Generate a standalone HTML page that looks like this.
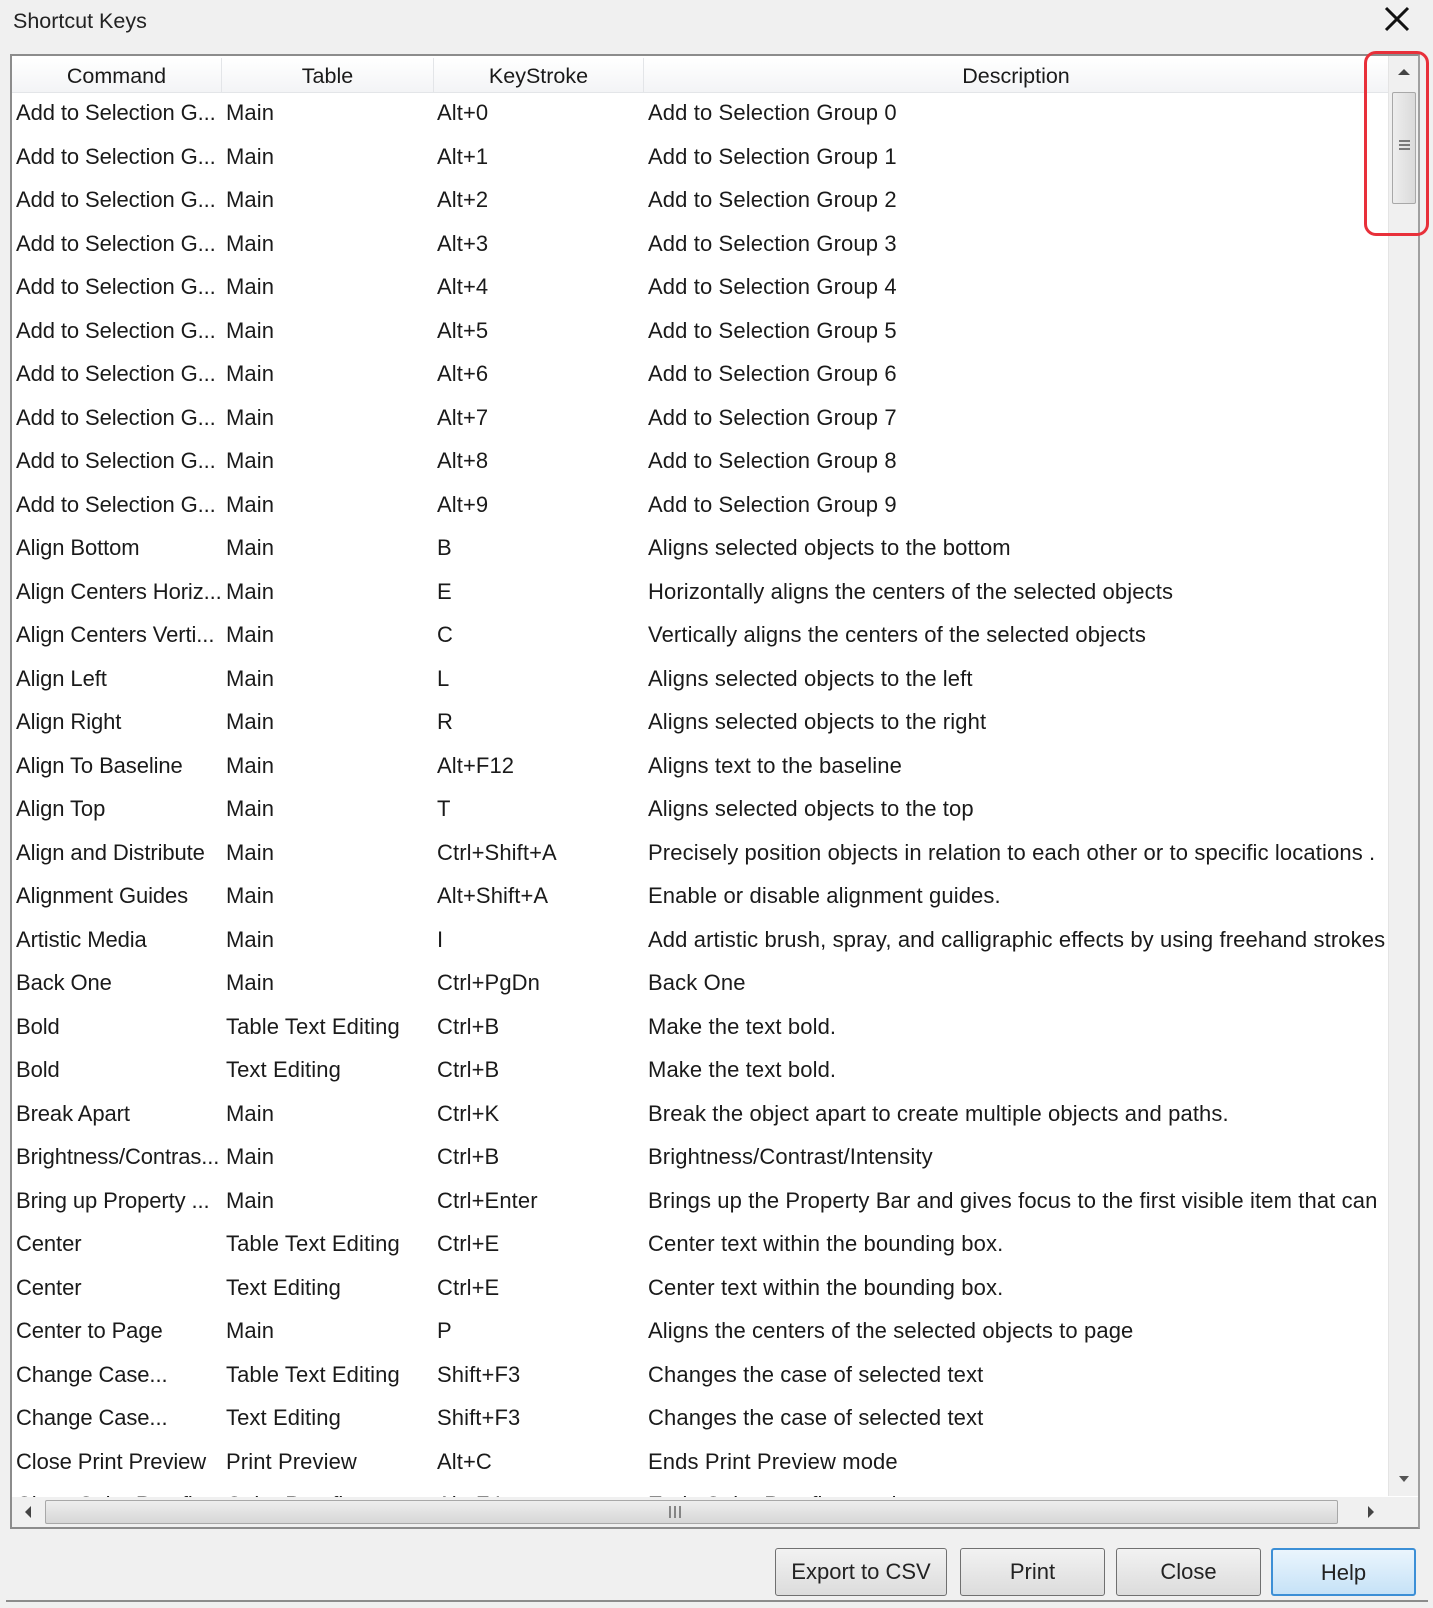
<!DOCTYPE html>
<html><head><meta charset="utf-8"><style>
html,body{margin:0;padding:0;}
body{width:1433px;height:1608px;background:#f0f0f0;position:relative;overflow:hidden;font-family:"Liberation Sans",sans-serif;color:#1a1a1a;}
.title{position:absolute;left:13px;top:9px;font-size:21.5px;color:#222;}
.x{position:absolute;left:1382px;top:4px;width:30px;height:30px;}
.frame{position:absolute;left:10px;top:54px;width:1410px;height:1475px;border:2px solid #8c8c8c;border-right-color:#a0a0a0;background:#fff;box-sizing:border-box;overflow:hidden;}
.hdr{position:absolute;left:0;top:2px;width:1376px;height:34px;background:linear-gradient(#fff,#f3f4f6);border-bottom:1px solid #e3e5e8;}
.hdr div{position:absolute;top:0;height:34px;line-height:36px;text-align:center;font-size:21.5px;border-right:1px solid #e3e5e8;box-sizing:border-box;}
.rows{position:absolute;left:0;top:35px;width:1376px;}
.r{position:relative;height:43.5px;line-height:43px;font-size:22px;white-space:nowrap;}
.r span{position:absolute;top:0;overflow:hidden;}
.c1{left:4px;width:208px;letter-spacing:-0.1px}.c2{left:214px;letter-spacing:0.1px}.c3{left:425px;letter-spacing:0.1px}.c4{left:636px;width:740px;letter-spacing:0.12px}
.vs{position:absolute;left:1376px;top:0;width:30px;height:1440px;background:#f0f0f0;border-left:1px solid #e4e4e4;}
.thumb{position:absolute;left:3px;top:36px;width:24px;height:112px;border:1px solid #a8a8a8;border-radius:2px;background:linear-gradient(90deg,#eee,#dadada);box-sizing:border-box;}
.hs{position:absolute;left:0;top:1441px;width:1406px;height:30px;background:#f0f0f0;}
.hthumb{position:absolute;left:33px;top:3px;width:1293px;height:24px;border:1px solid #a8a8a8;border-radius:2px;background:linear-gradient(#eee,#d6d6d6);box-sizing:border-box;}
.btn{position:absolute;top:1548px;height:48px;border:1px solid #707070;border-radius:3px;background:linear-gradient(#f2f2f2,#dcdcdc);font-size:22px;text-align:center;line-height:46px;box-sizing:border-box;color:#222;}
.red{position:absolute;left:1364px;top:51px;width:65px;height:185px;border:3px solid #e8303a;border-radius:12px;box-sizing:border-box;}
.bot{position:absolute;left:6px;top:1600px;width:1422px;height:2px;background:#8c8c8c;}
</style></head><body>
<div class="title">Shortcut Keys</div>
<svg class="x" viewBox="0 0 30 30"><path d="M4 4L26 26M26 4L4 26" stroke="#111" stroke-width="3"/></svg>
<div class="frame">
<div class="hdr"><div style="left:0;width:210px">Command</div><div style="left:210px;width:212px">Table</div><div style="left:422px;width:210px">KeyStroke</div><div style="left:632px;width:744px;border-right:none">Description</div></div>
<div class="rows">
<div class="r"><span class="c1">Add to Selection G...</span><span class="c2">Main</span><span class="c3">Alt+0</span><span class="c4">Add to Selection Group 0</span></div>
<div class="r"><span class="c1">Add to Selection G...</span><span class="c2">Main</span><span class="c3">Alt+1</span><span class="c4">Add to Selection Group 1</span></div>
<div class="r"><span class="c1">Add to Selection G...</span><span class="c2">Main</span><span class="c3">Alt+2</span><span class="c4">Add to Selection Group 2</span></div>
<div class="r"><span class="c1">Add to Selection G...</span><span class="c2">Main</span><span class="c3">Alt+3</span><span class="c4">Add to Selection Group 3</span></div>
<div class="r"><span class="c1">Add to Selection G...</span><span class="c2">Main</span><span class="c3">Alt+4</span><span class="c4">Add to Selection Group 4</span></div>
<div class="r"><span class="c1">Add to Selection G...</span><span class="c2">Main</span><span class="c3">Alt+5</span><span class="c4">Add to Selection Group 5</span></div>
<div class="r"><span class="c1">Add to Selection G...</span><span class="c2">Main</span><span class="c3">Alt+6</span><span class="c4">Add to Selection Group 6</span></div>
<div class="r"><span class="c1">Add to Selection G...</span><span class="c2">Main</span><span class="c3">Alt+7</span><span class="c4">Add to Selection Group 7</span></div>
<div class="r"><span class="c1">Add to Selection G...</span><span class="c2">Main</span><span class="c3">Alt+8</span><span class="c4">Add to Selection Group 8</span></div>
<div class="r"><span class="c1">Add to Selection G...</span><span class="c2">Main</span><span class="c3">Alt+9</span><span class="c4">Add to Selection Group 9</span></div>
<div class="r"><span class="c1">Align Bottom</span><span class="c2">Main</span><span class="c3">B</span><span class="c4">Aligns selected objects to the bottom</span></div>
<div class="r"><span class="c1">Align Centers Horiz...</span><span class="c2">Main</span><span class="c3">E</span><span class="c4">Horizontally aligns the centers of the selected objects</span></div>
<div class="r"><span class="c1">Align Centers Verti...</span><span class="c2">Main</span><span class="c3">C</span><span class="c4">Vertically aligns the centers of the selected objects</span></div>
<div class="r"><span class="c1">Align Left</span><span class="c2">Main</span><span class="c3">L</span><span class="c4">Aligns selected objects to the left</span></div>
<div class="r"><span class="c1">Align Right</span><span class="c2">Main</span><span class="c3">R</span><span class="c4">Aligns selected objects to the right</span></div>
<div class="r"><span class="c1">Align To Baseline</span><span class="c2">Main</span><span class="c3">Alt+F12</span><span class="c4">Aligns text to the baseline</span></div>
<div class="r"><span class="c1">Align Top</span><span class="c2">Main</span><span class="c3">T</span><span class="c4">Aligns selected objects to the top</span></div>
<div class="r"><span class="c1">Align and Distribute</span><span class="c2">Main</span><span class="c3">Ctrl+Shift+A</span><span class="c4">Precisely position objects in relation to each other or to specific locations .</span></div>
<div class="r"><span class="c1">Alignment Guides</span><span class="c2">Main</span><span class="c3">Alt+Shift+A</span><span class="c4">Enable or disable alignment guides.</span></div>
<div class="r"><span class="c1">Artistic Media</span><span class="c2">Main</span><span class="c3">I</span><span class="c4">Add artistic brush, spray, and calligraphic effects by using freehand strokes</span></div>
<div class="r"><span class="c1">Back One</span><span class="c2">Main</span><span class="c3">Ctrl+PgDn</span><span class="c4">Back One</span></div>
<div class="r"><span class="c1">Bold</span><span class="c2">Table Text Editing</span><span class="c3">Ctrl+B</span><span class="c4">Make the text bold.</span></div>
<div class="r"><span class="c1">Bold</span><span class="c2">Text Editing</span><span class="c3">Ctrl+B</span><span class="c4">Make the text bold.</span></div>
<div class="r"><span class="c1">Break Apart</span><span class="c2">Main</span><span class="c3">Ctrl+K</span><span class="c4">Break the object apart to create multiple objects and paths.</span></div>
<div class="r"><span class="c1">Brightness/Contras...</span><span class="c2">Main</span><span class="c3">Ctrl+B</span><span class="c4">Brightness/Contrast/Intensity</span></div>
<div class="r"><span class="c1">Bring up Property ...</span><span class="c2">Main</span><span class="c3">Ctrl+Enter</span><span class="c4">Brings up the Property Bar and gives focus to the first visible item that can</span></div>
<div class="r"><span class="c1">Center</span><span class="c2">Table Text Editing</span><span class="c3">Ctrl+E</span><span class="c4">Center text within the bounding box.</span></div>
<div class="r"><span class="c1">Center</span><span class="c2">Text Editing</span><span class="c3">Ctrl+E</span><span class="c4">Center text within the bounding box.</span></div>
<div class="r"><span class="c1">Center to Page</span><span class="c2">Main</span><span class="c3">P</span><span class="c4">Aligns the centers of the selected objects to page</span></div>
<div class="r"><span class="c1">Change Case...</span><span class="c2">Table Text Editing</span><span class="c3">Shift+F3</span><span class="c4">Changes the case of selected text</span></div>
<div class="r"><span class="c1">Change Case...</span><span class="c2">Text Editing</span><span class="c3">Shift+F3</span><span class="c4">Changes the case of selected text</span></div>
<div class="r"><span class="c1">Close Print Preview</span><span class="c2">Print Preview</span><span class="c3">Alt+C</span><span class="c4">Ends Print Preview mode</span></div>
<div class="r"><span class="c1">Close Color Proofing</span><span class="c2">Color Proofing</span><span class="c3">Alt+F4</span><span class="c4">Ends Color Proofing mode</span></div>
</div>
<div class="vs">
<svg style="position:absolute;left:9px;top:12px" width="12" height="8"><path d="M0 7L6 1L12 7Z" fill="#444"/></svg>
<div class="thumb"><svg style="position:absolute;left:6px;top:46px" width="11" height="14"><path d="M0 2H11M0 6H11M0 10H11" stroke="#555" stroke-width="1.5"/></svg></div>
<svg style="position:absolute;left:10px;top:1420px" width="10" height="7"><path d="M0 0L5 6L10 0Z" fill="#555"/></svg>
</div>
<div class="hs">
<svg style="position:absolute;left:12px;top:9px" width="7" height="12"><path d="M7 0L1 6L7 12Z" fill="#444"/></svg>
<div class="hthumb"><svg style="position:absolute;left:622px;top:5px" width="14" height="12"><path d="M2 0V12M7 0V12M12 0V12" stroke="#666" stroke-width="1.5"/></svg></div>
<svg style="position:absolute;left:1356px;top:9px" width="7" height="12"><path d="M0 0L6 6L0 12Z" fill="#444"/></svg>
</div>
</div>
<div class="btn" style="left:775px;width:172px">Export to CSV</div>
<div class="btn" style="left:960px;width:145px">Print</div>
<div class="btn" style="left:1116px;width:145px">Close</div>
<div class="btn" style="left:1271px;width:145px;border:2px solid #3c8fd6;background:linear-gradient(#eaf5fd,#c6e2f7)">Help</div>
<div class="red"></div>
<div class="bot"></div>
</body></html>
